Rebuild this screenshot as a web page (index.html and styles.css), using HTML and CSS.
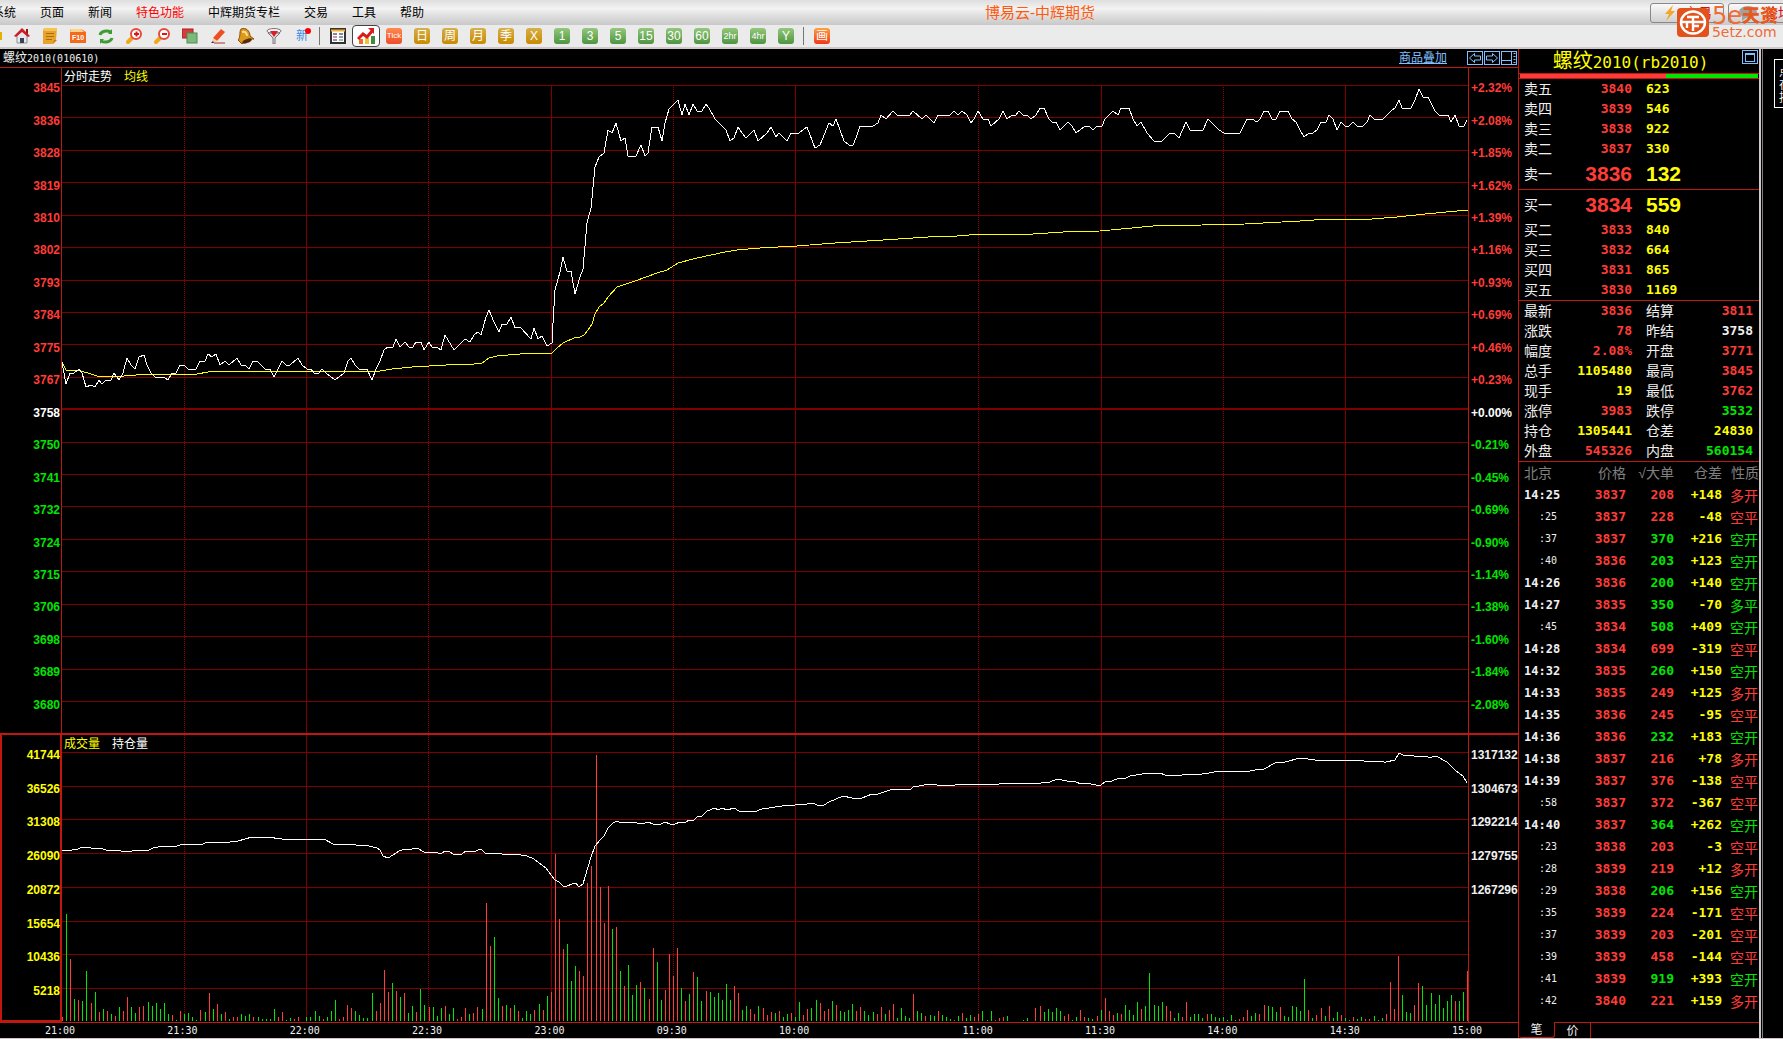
FILE: index.html
```html
<!DOCTYPE html>
<html lang="zh-CN">
<head>
    <meta charset="UTF-8">
    <meta name="viewport" content="width=device-width, initial-scale=1.0">
    <title>博易云-中辉期货</title>
    <link rel="stylesheet" href="styles.css">
</head>
<body>

    <header class="titlebar">
        <nav class="menu">
            <a href="#">系统</a>
            <a href="#">页面</a>
            <a href="#">新闻</a>
            <a href="#" class="hot">特色功能</a>
            <a href="#">中辉期货专栏</a>
            <a href="#">交易</a>
            <a href="#">工具</a>
            <a href="#">帮助</a>
        </nav>
        <h1 class="app-title">博易云-中辉期货</h1>
        <div class="quick">
            <button type="button">
                <svg width="16" height="16" viewBox="0 0 16 16"><path d="M11 0 3 9h4l-3 7 9-10H9z" fill="#f5a623"/></svg>交易
            </button>
            <button type="button">
                <svg width="20" height="16" viewBox="0 0 20 16"><ellipse cx="10" cy="7" rx="9" ry="6" fill="#a0a0a0"/><path d="M4 11v5l5-4z" fill="#a0a0a0"/></svg>论坛
            </button>
        </div>
    </header>

    <div class="logo">
        <svg width="32" height="29" viewBox="0 0 32 29">
            <rect width="32" height="29" rx="4" fill="#e2531b"/>
            <ellipse cx="16" cy="14.5" rx="12" ry="11" fill="none" stroke="#fff" stroke-width="2.4"/>
            <path d="M10 9h12M5 14h22M16 9v14M16 18h6M10 20v-6" fill="none" stroke="#fff" stroke-width="2.400"/>
        </svg>
        <div class="logo-text">
            <div class="logo-name"><span>5e</span><b>天资</b></div>
            <div class="logo-url">5etz.com</div>
        </div>
    </div>

    <div class="toolbar">
        <button type="button" aria-label="后退"><svg width="16" height="16"><rect x="1" y="4" width="15" height="8" fill="#e5b100"/></svg></button>
        <button type="button" aria-label="首页"><svg width="16" height="16"><path d="M3 8v7h10V8L8 3z" fill="#e6e8ee" stroke="#8a8f9c"/><path d="M12 1h2v5h-2z" fill="#9c1515"/><path d="M0 8 8 0l8 8-2 1-6-5-6 5z" fill="#d01c24"/><path d="M6 10h4v5H6z" fill="#3c4254"/></svg></button>
        <button type="button" aria-label="公告"><svg width="16" height="16"><path d="M2 0h13l-1 12-3 4H1V3z" fill="#e8a32c"/><path d="M2 0h13v3H2z" fill="#f6c455"/><path d="M4 5.500h8M4 8.500h8M4 11.500h6" stroke="#b06c08"/><path d="m11 16 1-4h3z" fill="#c47d10"/></svg></button>
        <button type="button" aria-label="F10"><svg width="16" height="16"><path d="M1 1h10l5 3v11H0V3z" fill="#f26a1b"/><path d="M1 1h10l3 3H0z" fill="#ffd28a"/><text x="8" y="12" class="t-f10">F10</text></svg></button>
        <button type="button" aria-label="刷新"><svg width="16" height="16" fill="none" stroke="#3f9b36" stroke-width="3"><path d="M2 7c1-4 7-5 11-3"/><path d="M14 10c-1 4-7 5-11 3"/><path d="M14 1v5h-4zM2 16v-5h4z" fill="#3f9b36" stroke="none"/></svg></button>
        <button type="button" aria-label="放大"><svg width="16" height="16"><path d="m7 9-5 5" stroke="#f0a818" stroke-width="4" stroke-linecap="round"/><circle cx="10" cy="6" r="5" fill="#fff" stroke="#e64a3c" stroke-width="2"/><path d="M8 6h5M10.500 3.500v5" stroke="#d81818" stroke-width="2"/></svg></button>
        <button type="button" aria-label="缩小"><svg width="16" height="16"><path d="m7 9-5 5" stroke="#f0a818" stroke-width="4" stroke-linecap="round"/><circle cx="10" cy="6" r="5" fill="#fff" stroke="#e64a3c" stroke-width="2"/><path d="M8 6h5" stroke="#d81818" stroke-width="2"/></svg></button>
        <button type="button" aria-label="叠加"><svg width="16" height="16"><rect x="0" y="1" width="11" height="9" fill="#d93a3a" stroke="#a82020"/><rect x="5" y="5" width="10" height="10" fill="#7cba7c" stroke="#4c8c4c"/></svg></button>
        <button type="button" aria-label="画线"><svg width="16" height="16"><path d="m3 10 8-9 4 3-8 9z" fill="#ee4f22"/><path d="m3 10 4 3-5 2z" fill="#f6d09a"/><path d="m1 15 2-2 1 2z" fill="#333"/><path d="M4 15h11" stroke="#a83228"/></svg></button>
        <button type="button" aria-label="预警"><svg width="16" height="16"><path d="M3 1c5-2 9 2 9 7l4 3c-3 0-9 1-12 5L0 12c3-3 1-8 3-11z" fill="#d99a1e" stroke="#8a4c08"/><ellipse cx="9" cy="13" rx="5" ry="2" fill="#5c2c08" transform="rotate(-22 9 13)"/><path d="M4 4c3-1 5 1 5 4" fill="none" stroke="#ffe08a" stroke-width="2"/></svg></button>
        <button type="button" aria-label="筛选"><svg width="16" height="16"><ellipse cx="8" cy="3" rx="7" ry="2.500" fill="#f4f4f4" stroke="#777"/><path d="m2 5 5 5v6h2v-6l5-5z" fill="#ddd" stroke="#777"/><path d="m4 3 4 6 4-6z" fill="#e01c24"/></svg></button>
        <button type="button" class="new">新<i></i></button>
        <span class="sep"></span>
        <button type="button" aria-label="报价"><svg width="16" height="16"><rect x="1" y="1" width="14" height="14" fill="#fff" stroke="#333" stroke-width="2"/><path d="M1 2.500h14" stroke="#f2b233" stroke-width="2"/><path d="M3 6h4M9 6h4" stroke="#111"/><path d="M3 9h4" stroke="#c22"/><path d="M9 9h4M3 12h4" stroke="#229"/><path d="M9 12h4" stroke="#282"/></svg></button>
        <button type="button" class="active" aria-label="分时"><svg width="18" height="18"><path d="M2 12h4v5H2z" fill="#f26b2c"/><path d="M8 11h4v6H8z" fill="#f0c23c"/><path d="M14 9h4v8h-4z" fill="#3c8c3c"/><path d="m1 12 5-5 4 3 6-7" fill="none" stroke="#d81c1c" stroke-width="3"/><path d="M11 1h6v6z" fill="#d81c1c"/></svg></button>
        <button type="button"><span class="key tick">Tick</span></button>
        <button type="button"><span class="key gold">日</span></button>
        <button type="button"><span class="key gold">周</span></button>
        <button type="button"><span class="key gold">月</span></button>
        <button type="button"><span class="key gold">季</span></button>
        <button type="button"><span class="key gold">X</span></button>
        <button type="button"><span class="key green">1</span></button>
        <button type="button"><span class="key green">3</span></button>
        <button type="button"><span class="key green">5</span></button>
        <button type="button"><span class="key green">15</span></button>
        <button type="button"><span class="key green">30</span></button>
        <button type="button"><span class="key green">60</span></button>
        <button type="button"><span class="key green hr">2hr</span></button>
        <button type="button"><span class="key green hr">4hr</span></button>
        <button type="button"><span class="key green">Y</span></button>
        <span class="sep"></span>
        <button type="button"><span class="key draw">画</span></button>
    </div>

    <div class="content">

        <main class="charts">
            <div class="chart-head">
                <span>螺纹<span class="num">2010(010610)</span></span>
                <a href="#" class="overlay">商品叠加</a>
                <div class="head-btns">
                    <button type="button" aria-label="前一个"><svg width="16" height="14"><path d="M2.500 7 7.500 2.500v2.500h6v4h-6v2.500z"/></svg></button>
                    <button type="button" aria-label="后一个"><svg width="16" height="14"><path d="M13.500 7 8.500 2.500v2.500h-6v4h6v2.500z"/></svg></button>
                    <button type="button" aria-label="布局"><svg width="16" height="14"><path d="M10.500 0v14M0 9.500h10"/><path d="M13.500 2v10" stroke-width="2" stroke-dasharray="1 2"/></svg></button>
                </div>
            </div>

            <section class="pane price">
                <div class="axis left" id="priceAxis"></div>
                <div class="plot">
                    <div class="legend"><span>分时走势</span><span class="yellow">均线</span></div>
                    <svg id="priceChart" viewBox="62 68 1406 665" preserveAspectRatio="none"></svg>
                </div>
                <div class="axis right" id="pctAxis"></div>
            </section>

            <section class="pane volume">
                <div class="axis left yellow" id="volAxis"></div>
                <div class="plot">
                    <div class="legend"><span class="yellow">成交量</span><span>持仓量</span></div>
                    <svg id="volChart" viewBox="62 735 1406 287" preserveAspectRatio="none"></svg>
                </div>
                <div class="axis right" id="oiAxis"></div>
            </section>

            <div class="times" id="times"></div>
        </main>

        <aside class="quote">
            <div class="quote-head">
                <h2>螺纹<span>2010(rb2010)</span></h2>
                <button type="button" aria-label="窗口"><svg width="16" height="14"><rect x="3.500" y="3.500" width="9" height="8"/><path d="M3 4.500h10"/></svg></button>
            </div>
            <div class="ratio"><div class="ask"></div><div class="bid"></div></div>

            <table class="book">
                <tr><th>卖五</th><td>3840</td><td>623</td></tr>
                <tr><th>卖四</th><td>3839</td><td>546</td></tr>
                <tr><th>卖三</th><td>3838</td><td>922</td></tr>
                <tr><th>卖二</th><td>3837</td><td>330</td></tr>
                <tr class="best"><th>卖一</th><td>3836</td><td>132</td></tr>
            </table>
            <table class="book">
                <tr class="best"><th>买一</th><td>3834</td><td>559</td></tr>
                <tr><th>买二</th><td>3833</td><td>840</td></tr>
                <tr><th>买三</th><td>3832</td><td>664</td></tr>
                <tr><th>买四</th><td>3831</td><td>865</td></tr>
                <tr><th>买五</th><td>3830</td><td>1169</td></tr>
            </table>

            <table class="stats">
                <tr><th>最新</th><td class="red">3836</td><th>结算</th><td class="red">3811</td></tr>
                <tr><th>涨跌</th><td class="red">78</td><th>昨结</th><td>3758</td></tr>
                <tr><th>幅度</th><td class="red">2.08%</td><th>开盘</th><td class="red">3771</td></tr>
                <tr><th>总手</th><td class="yellow">1105480</td><th>最高</th><td class="red">3845</td></tr>
                <tr><th>现手</th><td class="yellow">19</td><th>最低</th><td class="red">3762</td></tr>
                <tr><th>涨停</th><td class="red">3983</td><th>跌停</th><td class="green">3532</td></tr>
                <tr><th>持仓</th><td class="yellow">1305441</td><th>仓差</th><td class="yellow">24830</td></tr>
                <tr><th>外盘</th><td class="red">545326</td><th>内盘</th><td class="green">560154</td></tr>
            </table>

            <table class="ticks">
                <thead>
                    <tr><th>北京</th><th>价格</th><th>√大单</th><th>仓差</th><th>性质</th></tr>
                </thead>
                <tbody id="ticks"></tbody>
            </table>

            <div class="tabs">
                <button type="button" class="on">笔</button>
                <button type="button">价</button>
            </div>
        </aside>

        <div class="edge">
            <div class="tip">点在持</div>
        </div>
    </div>

    <script src="script.js"></script>
</body>
</html>
```
FILE: styles.css
```css
*{
    margin: 0;
    padding: 0;
    box-sizing: border-box;
}
body{
    display: flex;
    flex-direction: column;
    height: 100vh;
    overflow: hidden;
    background: #000;
    color: #f0f0f0;
    border-bottom: 1px solid #d0c8c8;
    font: 12px/16px "Liberation Sans", "Noto Sans CJK SC", sans-serif;
}
button{
    border: 0;
    background: none;
    font: inherit;
    color: inherit;
}
a{
    color: inherit;
    text-decoration: none;
}
.red{ color: #ff3c38; }
.green{ color: #00e600; }
.yellow{ color: #ffff00; }
.white{ color: #fff; }

/* title bar */
.titlebar{
    display: flex;
    justify-content: space-between;
    align-items: center;
    height: 25px;
    flex: none;
    padding-top: 1px;
    color: #000;
    background: linear-gradient(#dedede, #f3f3f3 35%, #e4e4e4 55%, #c8c8c8);
}
.menu{
    display: flex;
    gap: 24px;
    margin-left: -8px;
}
.menu .hot{
    color: #ff0000;
}
.app-title{
    margin-left: 6px;
    font-size: 15px;
    font-weight: normal;
    color: #ff5a10;
}
.quick{
    display: flex;
    gap: 4px;
    width: 133px;
    overflow: hidden;
}
.quick button{
    display: flex;
    align-items: center;
    justify-content: center;
    gap: 6px;
    flex: none;
    width: 74px;
    height: 20px;
    border: 1px solid #888;
    border-radius: 3px;
    color: #d81010;
    font-size: 14px;
    background: linear-gradient(#fafafa, #d0d0d0);
}
.logo{
    position: absolute;
    top: 8px;
    right: 5px;
    display: flex;
    gap: 3px;
    color: #ee6c38;
}
.logo-name{
    display: flex;
    align-items: center;
    height: 16px;
}
.logo-name span{
    font: 24px/16px "DejaVu Sans", sans-serif;
}
.logo-name b{
    font-size: 18px;
    font-weight: 900;
    color: #e8581c;
}
.logo-url{
    font: 14px/16px "DejaVu Sans", sans-serif;
}

/* toolbar */
.toolbar{
    display: flex;
    align-items: center;
    height: 24px;
    flex: none;
    border-bottom: 2px solid #d0c8c8;
    background: #ebebeb;
    overflow: hidden;
}
.toolbar button{
    display: flex;
    align-items: center;
    justify-content: center;
    flex: none;
    width: 28px;
    height: 22px;
}
.toolbar button:first-child{
    margin-left: -20px;
}
.toolbar .active{
    border: 1px solid #444;
    border-radius: 4px;
    background: #fff;
}
.toolbar .new{
    position: relative;
    color: #3c8ce6;
}
.new i{
    position: absolute;
    top: 3px;
    right: 5px;
    width: 6px;
    height: 6px;
    border-radius: 50%;
    background: #ff0000;
}
.sep{
    width: 1px;
    height: 18px;
    margin: 0 4px 0 3px;
    flex: none;
    background: #777;
}
.t-f10{
    font: bold 7px "Liberation Sans", sans-serif;
    fill: #fff;
    text-anchor: middle;
}
.key{
    width: 16px;
    height: 16px;
    border-radius: 3px;
    color: #fff;
    font-size: 12px;
    line-height: 16px;
    text-align: center;
}
.key.gold{ background: linear-gradient(#d6b04a, #c88a00); }
.key.green{ background: linear-gradient(#94c87c, #4e9440); }
.key.draw{ background: linear-gradient(#ffa040, #f03818); }
.key.tick{
    background: linear-gradient(#ff8a50, #f04c28);
    font-size: 8px;
}
.key.hr{
    font-size: 9px;
}

/* charts */
.content{
    display: flex;
    flex: 1;
    min-height: 0;
}
.charts{
    display: flex;
    flex-direction: column;
    flex: 1;
    min-width: 0;
}
.chart-head{
    display: flex;
    align-items: center;
    height: 19px;
    flex: none;
    padding: 0 1px 0 3px;
    border-bottom: 1px solid #c01810;
}
.num{
    font: 10px/16px "DejaVu Sans Mono", monospace;
}
.overlay{
    margin-left: auto;
    margin-right: 20px;
    color: #80c0ff;
    text-decoration: underline;
}
.head-btns{
    display: flex;
    gap: 1px;
}
.head-btns button,
.quote-head button{
    display: flex;
    width: 16px;
    height: 14px;
    outline: 1px solid #80c0ff;
    outline-offset: -1px;
}
.head-btns svg,
.quote-head svg{
    fill: none;
    stroke: #80c0ff;
}
.pane{
    display: grid;
    grid-template-columns: 62px minmax(0, 1fr) 50px;
    min-height: 0;
}
.price{
    flex: 665 1 0;
}
.volume{
    flex: 287 1 2px;
    border-top: 2px solid #c01810;
}
.axis{
    display: grid;
    grid-auto-rows: 1fr;
    align-items: center;
    min-height: 0;
    font-weight: bold;
}
.axis.left{
    border-right: 1px solid #c01810;
    text-align: right;
    padding-right: 1px;
}
.axis.right{
    border-left: 1px solid #c01810;
    padding-left: 2px;
}
.price .axis{
    padding-top: 4px;
    padding-bottom: 12px;
}
.volume .axis{
    grid-template-rows: repeat(8, 1fr);
    padding-top: 3px;
    padding-bottom: 14px;
}
.volume .left{
    border: 2px solid #c01810;
    border-top: 0;
    padding-right: 0;
    padding-bottom: 12px;
}
.plot{
    position: relative;
    min-height: 0;
}
.plot svg{
    display: block;
    width: 100%;
    height: 100%;
}
.legend{
    position: absolute;
    top: 1px;
    left: 2px;
    display: flex;
    gap: 12px;
    color: #fff;
}
.plot path,
.plot polyline{
    fill: none;
    stroke-width: 1;
    vector-effect: non-scaling-stroke;
    shape-rendering: crispEdges;
}
.grid{ stroke: #800000; }
.grid-dot{
    stroke: #900000;
    stroke-dasharray: 1 1;
}
.plot .zero{
    stroke: #800000;
    stroke-width: 2;
}
.line-white{ stroke: #fff; }
.line-yellow{ stroke: #ffff00; }
.bar-up{ stroke: #ff3c38; }
.bar-down{ stroke: #00e600; }
.times{
    display: grid;
    grid-template-columns: repeat(6, 30fr) 45fr repeat(4, 30fr) 66px;
    height: 16px;
    flex: none;
    padding-left: 45px;
    border-top: 1px solid #c01810;
    font: 10px/15px "DejaVu Sans Mono", monospace;
}

/* quote panel */
.quote{
    display: flex;
    flex-direction: column;
    width: 241px;
    flex: none;
    border-left: 1px solid #c01810;
}
.quote-head{
    display: flex;
    height: 24px;
    padding: 1px 1px 0 0;
    color: #ffff00;
}
.quote-head h2{
    flex: 1;
    font-size: 20px;
    line-height: 23px;
    font-weight: normal;
    text-align: center;
}
.quote-head h2 span{
    font: 16px/23px "DejaVu Sans Mono", monospace;
}
.ratio{
    display: flex;
    height: 6px;
    padding: 0 1px;
    border-top: 1px solid #c01810;
    border-bottom: 1px solid #c01810;
}
.ask{
    flex: 146;
    background: #ff3c38;
}
.bid{
    flex: 92;
    background: #00e600;
}
table{
    width: 100%;
    table-layout: fixed;
    border-spacing: 0;
}
th{
    font-size: 14px;
    font-weight: normal;
    text-align: left;
}
td{
    font: bold 13px/16px "DejaVu Sans Mono", monospace;
    text-align: right;
}
.book,
.stats{
    border-bottom: 1px solid #c01810;
}
.book tr,
.stats tr{
    height: 20px;
}
.book th,
.stats th:first-child{
    width: 41px;
    padding-left: 5px;
}
.book td:nth-child(2){
    width: 72px;
    color: #ff3c38;
}
.book td:nth-child(3){
    padding-left: 14px;
    text-align: left;
    color: #ffff00;
}
.book .best{
    height: 30px;
}
.book .best td{
    font: bold 21px/24px "Liberation Sans", sans-serif;
}
.stats td:nth-child(2){
    width: 72px;
}
.stats th:nth-child(3){
    width: 50px;
    padding-left: 14px;
}
.stats td:nth-child(4){
    padding-right: 6px;
}
.ticks tr{
    height: 22px;
}
.ticks th{
    text-align: right;
    color: #808080;
    white-space: nowrap;
}
.ticks th:nth-child(1){
    width: 41px;
    padding-left: 5px;
    text-align: left;
}
.ticks th:nth-child(2){ width: 66px; }
.ticks th:nth-child(3),
.ticks th:nth-child(4){ width: 48px; }
.ticks .time{
    padding-left: 5px;
    text-align: left;
    font-size: 12px;
}
.ticks .sec{
    padding-right: 3px;
    font-size: 10px;
    font-weight: normal;
}
.ticks .kind{
    padding-right: 1px;
    font: 14px/16px "Noto Sans CJK SC", sans-serif;
}
.tabs{
    display: flex;
    height: 16px;
    margin-top: auto;
}
.tabs button{
    width: 36px;
    height: 16px;
    border-top: 1px solid #c01810;
    border-right: 1px solid #c01810;
    line-height: 14px;
}
.tabs .on{
    border-top: 0;
    border-bottom: 1px solid #c01810;
    border-radius: 0 0 3px 3px;
}
.tabs::after{
    content: "";
    flex: 1;
    border-top: 1px solid #c01810;
}

/* right edge */
.edge{
    width: 24px;
    flex: none;
    padding: 10px 0 0 10px;
    border-left: 2px solid #d0c8c8;
    box-shadow: inset 1px 0 #000, inset 2px 0 #808080;
    overflow: hidden;
}
.tip{
    width: 18px;
    height: 49px;
    margin-left: 3px;
    padding: 6px 0 0 4px;
    border: 1px solid #fff;
    line-height: 13px;
}
```
FILE: script.js
```javascript
var NS = "http://www.w3.org/2000/svg";

var prices = [3845,3836,3828,3819,3810,3802,3793,3784,3775,3767,3758,3750,3741,3732,3724,3715,3706,3698,3689,3680];
var percents = ["+2.32%","+2.08%","+1.85%","+1.62%","+1.39%","+1.16%","+0.93%","+0.69%","+0.46%","+0.23%","+0.00%","-0.21%","-0.45%","-0.69%","-0.90%","-1.14%","-1.38%","-1.60%","-1.84%","-2.08%"];
var volumes = [41744,36526,31308,26090,20872,15654,10436,5218];
var interests = [1317132,1304673,1292214,1279755,1267296];
var times = ["21:00","21:30","22:00","22:30","23:00","09:30","10:00","11:00","11:30","14:00","14:30","15:00"];

// x of the hour lines and of the dotted half-hour lines
var solidX = [306,551,795,1101,1345];
var dottedX = [184,428,673,978,1223];

var priceLine = "62,362 66,384 70,373 74,373 79,369 82,373 86,387 91,385 95,387 99,380 102,384 106,380 111,380 114,373 119,380 123,373 127,358 131,365 135,369 139,357 144,355 147,365 151,373 155,377 164,377 168,380 172,373 176,373 180,365 184,365 188,369 196,369 200,361 205,361 208,354 212,357 216,354 220,365 225,361 229,365 237,358 241,365 245,365 249,369 253,361 257,361 265,369 270,369 274,377 282,361 286,365 290,365 298,358 302,365 307,369 311,369 314,373 319,373 322,369 326,373 335,380 344,373 348,361 351,358 355,365 359,369 367,369 372,380 376,369 380,361 384,350 388,347 393,347 396,339 400,347 405,342 409,347 413,347 416,342 421,342 424,350 429,342 432,347 437,347 441,350 445,335 454,350 465,339 470,342 474,335 478,332 481,335 486,317 489,310 494,322 499,332 502,324 507,324 511,317 515,328 520,327 531,339 534,328 538,339 542,336 547,346 552,343 553,323 555,290 560,272 563,257 567,271 571,271 575,294 580,277 583,269 587,223 591,208 595,167 599,157 604,153 608,130 612,133 616,123 621,141 625,138 628,156 636,156 641,145 645,156 648,153 652,127 658,127 662,141 665,123 669,109 678,100 682,115 685,104 689,115 693,104 697,111 702,111 706,104 709,108 715,119 726,130 730,141 734,138 738,127 742,133 746,138 754,130 758,141 767,133 771,127 776,137 779,133 787,141 791,133 799,133 807,127 815,148 820,145 829,123 833,126 836,119 844,141 849,145 853,145 856,138 860,126 873,126 878,123 881,115 886,119 893,111 897,115 910,115 913,111 922,119 926,115 934,123 938,115 950,115 954,111 958,115 962,111 967,115 971,123 974,119 978,111 983,119 988,119 991,126 999,119 1003,111 1007,119 1012,115 1016,115 1019,111 1023,115 1027,115 1031,119 1036,115 1040,108 1044,108 1049,119 1052,122 1056,122 1060,130 1068,122 1072,126 1076,133 1085,126 1089,126 1093,130 1097,126 1102,126 1105,119 1113,111 1118,115 1121,108 1129,108 1133,119 1137,126 1141,122 1147,133 1154,141 1162,141 1170,133 1174,133 1179,138 1186,122 1190,130 1203,130 1208,119 1219,130 1224,133 1240,133 1247,119 1252,119 1257,122 1260,119 1264,111 1268,111 1272,119 1276,119 1280,111 1288,111 1292,119 1296,122 1300,130 1304,137 1309,133 1313,133 1317,130 1321,122 1326,122 1329,115 1333,119 1337,130 1341,122 1345,126 1349,126 1353,122 1357,126 1363,126 1367,122 1370,115 1374,119 1383,119 1391,111 1395,108 1399,100 1402,108 1411,108 1415,100 1419,89 1423,97 1428,97 1435,111 1439,115 1448,115 1451,122 1455,115 1459,126 1464,126 1467,120";

var avgLine = "62,362 66,370 80,371 88,373 97,376 124,376 149,374 197,374 208,372 231,371 380,371 392,369 412,367 446,365 474,364 482,363 489,358 497,356 520,354 552,353 557,348 563,343 574,338 580,337 584,335 588,330 592,324 595,314 599,307 604,303 608,297 617,287 635,281 657,273 667,270 678,263 697,258 725,252 737,250 760,248 797,246 835,243 883,240 928,237 957,236 982,234 1033,234 1063,232 1100,231 1153,226 1202,225 1245,224 1300,221 1328,219 1372,219 1397,217 1425,214 1468,210";

var interestLine = "62,851 72,850 78,849 82,847 88,847 94,849 99,848 110,851 115,850 127,852 138,850 147,851 153,848 163,846 177,846 183,844 203,844 207,842 230,842 238,841 252,837 267,837 282,839 324,839 333,844 352,844 356,845 369,846 377,848 380,850 383,856 388,858 393,855 399,851 405,849 412,849 417,848 424,852 438,853 442,853 445,851 450,852 453,854 462,854 466,851 473,852 481,849 485,853 502,854 515,854 527,856 534,859 539,863 546,868 551,875 555,880 559,882 563,886 567,886 572,884 576,883 579,887 583,884 588,867 591,857 595,846 600,840 604,836 608,828 613,823 617,821 621,823 625,822 629,823 632,822 637,823 645,823 648,822 653,824 661,824 665,822 670,824 675,824 680,822 686,822 689,820 694,820 697,817 702,816 707,811 715,808 718,810 722,808 727,810 734,808 739,811 743,812 747,811 754,812 762,809 782,806 795,805 807,804 812,803 820,806 824,805 829,802 843,796 852,798 862,798 872,794 878,794 893,789 903,789 910,790 913,787 930,784 937,785 955,785 967,784 972,785 980,784 991,785 1007,783 1041,783 1050,782 1057,779 1067,781 1076,782 1081,784 1084,783 1091,784 1096,785 1101,785 1106,781 1109,782 1117,779 1126,778 1130,776 1148,773 1160,773 1165,775 1176,775 1179,776 1185,774 1196,775 1209,773 1219,771 1250,771 1255,770 1264,769 1275,763 1285,762 1300,758 1315,760 1322,761 1332,760 1364,761 1366,761 1384,762 1386,762 1395,760 1399,753 1403,755 1414,756 1428,757 1432,757 1436,756 1447,762 1456,771 1463,776 1467,783";

// one bar a minute, negative = down (green)
var bars = [
    4,-107,62,-22,21,-20,-50,18,-29,9,-12,10,-7,5,-14,10,24,-14,-8,14,15,-19,-15,-18,-12,-18,-7,6,-1,10,
    -7,-8,-4,-1,11,-9,28,-12,17,-7,9,-2,4,4,-7,-5,-7,4,-4,-2,-2,-2,-12,4,9,-1,-3,2,4,0,
    -4,-4,-10,-5,2,-4,-10,-21,2,4,16,13,-10,-6,-3,-3,-28,10,18,51,29,-38,30,-24,28,-8,-15,9,-32,-16,
    14,-14,-5,-13,15,-7,-13,2,4,13,-7,8,14,-12,118,75,-84,-23,15,-16,13,-16,10,-3,-10,-7,11,-17,11,-25,
    29,167,102,72,-77,-40,-55,50,45,138,155,266,134,98,135,-92,94,-50,35,-56,-26,-36,39,-33,22,73,-59,-21,31,67,
    45,73,-33,20,-27,49,-44,-20,30,-29,-24,-28,-21,-37,-21,35,28,-11,-15,12,7,-15,13,6,9,-8,10,-4,-7,8,
    -4,-19,6,12,-13,-21,18,10,12,-20,16,-10,-9,-11,-17,10,14,-10,-6,-9,7,14,-7,11,17,-3,-13,-5,-3,27,
    -10,-8,5,-6,-5,10,-6,-4,-2,1,-5,8,-3,-6,4,7,-10,-1,-10,1,3,4,-5,0,0,0,-1,-3,0,13,
    15,-9,-12,-9,-13,-10,5,7,-1,-4,11,4,-3,-2,5,-11,23,10,6,-8,7,-16,-11,-6,-19,12,-15,-48,-16,-15,
    -19,15,10,-3,-8,4,19,-4,-7,-7,-3,7,-7,-4,-3,-4,-1,-6,-1,2,4,11,-5,-8,7,16,-15,-14,-9,14,
    -5,-4,-15,-14,-10,-42,11,-3,6,13,-5,15,-3,-9,6,-3,-1,4,-2,-4,2,2,-5,-1,-3,7,39,12,65,-26,
    -9,-8,16,38,-35,-16,-28,-17,-26,-13,-20,-26,20,-20,-29,50
];

// time, price, volume, position change, kind; r = red, g = green
var ticks = [
    ["14:25",3837,208,"+148","多开","r"],[":25",3837,228,"-48","空平","r"],[":37",3837,370,"+216","空开","g"],
    [":40",3836,203,"+123","空开","g"],["14:26",3836,200,"+140","空开","g"],["14:27",3835,350,"-70","多平","g"],
    [":45",3834,508,"+409","空开","g"],["14:28",3834,699,"-319","空平","r"],["14:32",3835,260,"+150","空开","g"],
    ["14:33",3835,249,"+125","多开","r"],["14:35",3836,245,"-95","空平","r"],["14:36",3836,232,"+183","空开","g"],
    ["14:38",3837,216,"+78","多开","r"],["14:39",3837,376,"-138","空平","r"],[":58",3837,372,"-367","空平","r"],
    ["14:40",3837,364,"+262","空开","g"],[":23",3838,203,"-3","空平","r"],[":28",3839,219,"+12","多开","r"],
    [":29",3838,206,"+156","空开","g"],[":35",3839,224,"-171","空平","r"],[":37",3839,203,"-201","空平","r"],
    [":39",3839,458,"-144","空平","r"],[":41",3839,919,"+393","空开","g"],[":42",3840,221,"+159","多开","r"]
];

function fill(id, list, colorOf){
    var box = document.getElementById(id);
    list.forEach(function(text, i){
        var span = document.createElement("span");
        span.textContent = text;
        if( colorOf ){
            span.className = colorOf(i);
        }
        box.appendChild(span);
    });
}

function draw(svg, tag, attr, value, cls){
    var el = document.createElementNS(NS, tag);
    el.setAttribute(attr, value);
    el.setAttribute("class", cls);
    svg.appendChild(el);
}

function verticals(list, top, bottom){
    return list.map(function(x){
        return "M" + (x + 0.5) + " " + top + "V" + bottom;
    }).join("");
}

function horizontals(first, step, count, skip){
    var d = "";
    for( var i = 0; i < count; i++ ){
        if( i !== skip ){
            d += "M62 " + (Math.round(first + i * step) + 0.5) + "H1468";
        }
    }
    return d;
}

function drawPrice(){
    var svg = document.getElementById("priceChart");
    draw(svg, "path", "d", horizontals(85, 32.42, 20, 10) + verticals(solidX, 85, 733), "grid");
    draw(svg, "path", "d", verticals(dottedX, 85, 733), "grid-dot");
    draw(svg, "path", "d", "M62 409H1468", "zero");
    draw(svg, "polyline", "points", avgLine, "line-yellow");
    draw(svg, "polyline", "points", priceLine, "line-white");
}

function drawVolume(){
    var svg = document.getElementById("volChart");
    var up = "", down = "";
    draw(svg, "path", "d", horizontals(752, 33.7, 8) + verticals(solidX, 735, 1022), "grid");
    draw(svg, "path", "d", verticals(dottedX, 735, 1022), "grid-dot");
    bars.forEach(function(v, i){
        var d = "M" + (Math.round(62 + i * 4.073) + 0.5) + " 1021v" + -Math.abs(v);
        if( v > 0 ){
            up += d;
        }else if( v < 0 ){
            down += d;
        }
    });
    draw(svg, "path", "d", up, "bar-up");
    draw(svg, "path", "d", down, "bar-down");
    draw(svg, "polyline", "points", interestLine, "line-white");
}

function drawTicks(){
    var html = "";
    ticks.forEach(function(t){
        var color = t[5] == "r" ? "red" : "green";
        html += "<tr><td class='" + (t[0].length > 3 ? "time" : "sec") + "'>" + t[0] + "</td>"
            + "<td class='red'>" + t[1] + "</td>"
            + "<td class='" + color + "'>" + t[2] + "</td>"
            + "<td class='yellow'>" + t[3] + "</td>"
            + "<td class='kind " + color + "'>" + t[4] + "</td></tr>";
    });
    document.getElementById("ticks").innerHTML = html;
}

function trend(i){
    return i < 10 ? "red" : i == 10 ? "white" : "green";
}

fill("priceAxis", prices, trend);
fill("pctAxis", percents, trend);
fill("volAxis", volumes);
fill("oiAxis", interests);
fill("times", times);
drawPrice();
drawVolume();
drawTicks();
```
